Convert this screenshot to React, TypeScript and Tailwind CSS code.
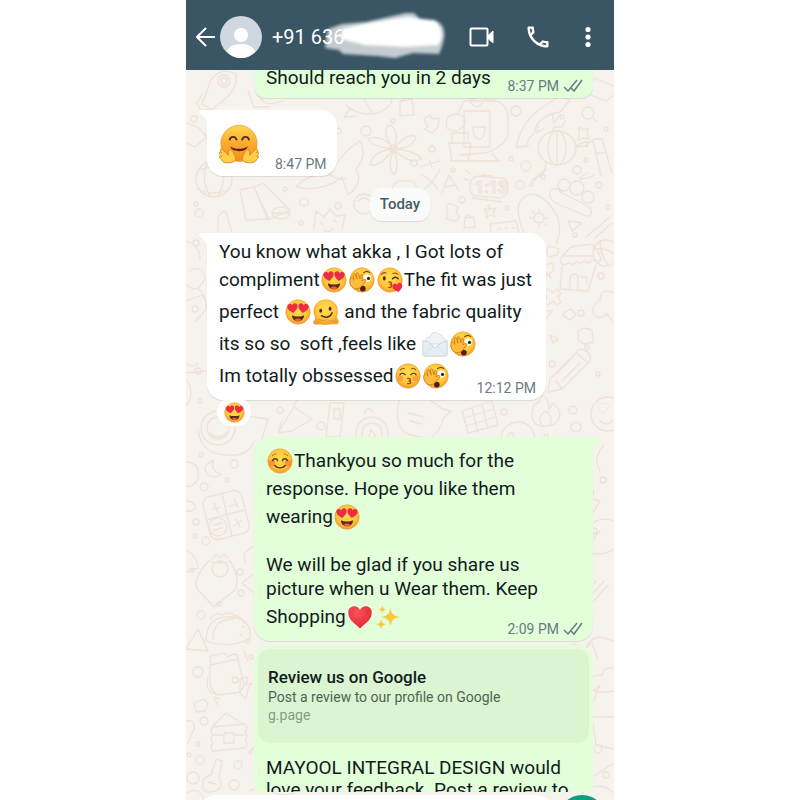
import React from "react";

type Kind = "love" | "peek" | "kiss" | "melt" | "kissclosed" | "mail" | "smile" | "hug" | "heart" | "sparkles";

const HEART = "M0 10C-4 6-11 3-11-4c0-7 9-8 11-2 2-6 11-5 11 2 0 7-7 10-11 14z";

function Face() {
  return <circle cx="32" cy="32" r="30" fill="url(#face)" stroke="#e9982a" strokeWidth="1.5" />;
}

function EmojiArt({ kind }: { kind: Kind }) {
  switch (kind) {
    case "love":
      return (
        <>
          <Face />
          <path d={HEART} transform="translate(19 23) rotate(-8) scale(1.15)" fill="#ee2b45" />
          <path d={HEART} transform="translate(45 23) rotate(8) scale(1.15)" fill="#ee2b45" />
          <path d="M17 40c8 4 22 4 30 0 0 8-6 15-15 15s-15-7-15-15z" fill="#5a2a12" />
          <path d="M24 51c4-4 12-4 16 0-4 5-12 5-16 0z" fill="#f05a4a" />
        </>
      );
    case "peek":
      return (
        <>
          <Face />
          <path d="M36 14c5-4 11-4 15 0" fill="none" stroke="#7a4512" strokeWidth="3" strokeLinecap="round" />
          <circle cx="45" cy="27" r="9" fill="#fff" />
          <circle cx="48" cy="28" r="4" fill="#3f2413" />
          <ellipse cx="34" cy="53" rx="7" ry="7" fill="#4a2410" />
          <path
            d="M3 31c3-8 7-5 9 2l-2-14c1-4 5-4 6 0l4 11-2-13c1-4 5-3 6 0l3 12 1-9c2-4 6-2 5 2l-1 12 5-3c4-2 6 2 3 5L31 47c-5 7-17 9-23 2-5-5-8-11-5-18z"
            fill="#ffbd3b"
            stroke="#c97518"
            strokeWidth="2"
            strokeLinejoin="round"
          />
        </>
      );
    case "kiss":
      return (
        <>
          <Face />
          <path d="M10 18c4-4 9-5 13-3M39 16c5-2 9-1 12 2" fill="none" stroke="#8a5217" strokeWidth="2.5" strokeLinecap="round" />
          <ellipse cx="18" cy="28" rx="3.5" ry="5" fill="#4a2a12" />
          <path d="M38 29c4-4 10-4 14 0" fill="none" stroke="#4a2a12" strokeWidth="3.5" strokeLinecap="round" />
          <path d="M29 37c9-1 9 6 2 6 8 0 8 8-2 7" fill="none" stroke="#b3341c" strokeWidth="3" strokeLinecap="round" />
          <path d={HEART} transform="translate(51 51) rotate(-12) scale(1.1)" fill="#ee2b45" />
        </>
      );
    case "melt":
      return (
        <>
          <path
            d="M32 2c18 0 29 13 28 29 0 8-3 12-1 17 2 6 5 6 3 11-2 4-8 2-13 2-8 0-12 2-19 2-8 0-11-2-17-1-6 0-12 1-12-4 0-5 5-5 5-11 0-5-4-9-4-16C2 15 14 2 32 2z"
            fill="url(#face)"
            stroke="#e9982a"
            strokeWidth="1.5"
          />
          <ellipse cx="19" cy="29" rx="3.5" ry="5" fill="#4a2a12" />
          <ellipse cx="42" cy="24" rx="3.5" ry="5" fill="#4a2a12" />
          <path d="M21 41c10 7 22 4 26-7" fill="none" stroke="#4a2a12" strokeWidth="3.5" strokeLinecap="round" />
          <path d="M12 50c8 3 16 4 22 1M40 54c5 1 9 0 12-1" fill="none" stroke="#e9982a" strokeWidth="2.5" strokeLinecap="round" />
        </>
      );
    case "kissclosed":
      return (
        <>
          <Face />
          <circle cx="13" cy="38" r="7" fill="#f58a3c" opacity=".6" />
          <circle cx="51" cy="38" r="7" fill="#f58a3c" opacity=".6" />
          <path d="M13 17c3-3 6-4 10-3M41 14c4-1 8 0 10 3" fill="none" stroke="#8a5217" strokeWidth="2.5" strokeLinecap="round" />
          <path d="M12 29c3-5 10-5 13 0M39 29c3-5 10-5 13 0" fill="none" stroke="#4a2a12" strokeWidth="3" strokeLinecap="round" />
          <path d="M31 38c9-1 9 6 2 6 8 0 8 8-2 7" fill="none" stroke="#b3341c" strokeWidth="3" strokeLinecap="round" />
        </>
      );
    case "smile":
      return (
        <>
          <Face />
          <circle cx="12" cy="37" r="8" fill="#f26d2f" opacity=".55" />
          <circle cx="52" cy="37" r="8" fill="#f26d2f" opacity=".55" />
          <path d="M13 19c3-4 6-5 10-4M41 15c4-1 7 0 10 4" fill="none" stroke="#a8681c" strokeWidth="2" strokeLinecap="round" />
          <path d="M14 31c2-6 10-6 12 0M38 31c2-6 10-6 12 0" fill="none" stroke="#5a2f12" strokeWidth="3.5" strokeLinecap="round" />
          <path d="M19 43c7 8 19 8 26 0" fill="none" stroke="#5a2f12" strokeWidth="3.5" strokeLinecap="round" />
        </>
      );
    case "hug":
      return (
        <>
          <circle cx="32" cy="31" r="29" fill="url(#hugface)" stroke="#e58f26" strokeWidth="1" />
          <path d="M17 25c2-6 9-6 11 0M37 25c2-6 9-6 11 0" fill="none" stroke="#4f2c12" strokeWidth="3" strokeLinecap="round" />
          <path d="M18 36c8 5 20 5 28 0-2 10-26 10-28 0z" fill="#54280f" />
          {["", "translate(64 0) scale(-1 1)"].map((t) => (
            <path
              key={t}
              transform={t}
              d="M17 62C9 63 5 60 4 57l-3-3c-1-3 1-3 3-2l-4-5c0-3 3-3 4-1l-2-4c0-3 3-3 5 0l8 8c0-5 0-9 3-9 4 0 4 4 7 9 4 8 0 11-8 12z"
              fill="#ffcf45"
              stroke="#d98a1c"
              strokeWidth="1.5"
              strokeLinejoin="round"
            />
          ))}
        </>
      );
    case "heart":
      return <path d="M32 60C22 49 3 41 3 21 3 3 26 0 32 15 38 0 61 3 61 21c0 20-19 28-29 39z" fill="url(#redheart)" />;
    case "sparkles":
      return (
        <g fill="#fbc740">
          <path d="M38 8c2 16 6 21 24 24-18 3-22 8-24 24-2-16-6-21-24-24 18-3 22-8 24-24z" />
          <path d="M15 36c1 9 4 12 13 14-9 2-12 5-13 13-1-8-4-11-13-13 9-2 12-5 13-14zM18 3c1 7 3 9 10 10-7 2-9 4-10 10-1-6-3-8-10-10 7-1 9-3 10-10z" />
        </g>
      );
    case "mail":
      return (
        <>
          <path d="M10 32C4 22 12 14 20 15 22 4 34 0 42 8c6-1 8 4 9 8 8 2 7 12 3 16z" fill="#eef3f7" stroke="#cdd8e0" strokeWidth="2" />
          <path d="M2 24l12 2 18 15 18-13 12-4v34q0 4-4 4H6q-4 0-4-4z" fill="#e6eef4" stroke="#c2d0da" strokeWidth="2" strokeLinejoin="round" />
          <path d="M3 60l23-22M61 60L38 38" stroke="#d3dee6" strokeWidth="2" />
        </>
      );
  }
}

const Emoji = ({ kind, className = "mx-px size-[26px]" }: { kind: Kind; className?: string }) => (
  <svg viewBox="0 0 64 64" role="img" aria-label={kind} className={`inline-block shrink-0 ${className}`}>
    <EmojiArt kind={kind} />
  </svg>
);

const CIRCLES = [
  [8, 118, 3], [152, 130, 3], [180, 130, 5], [207, 120, 2], [246, 148, 3], [228, 162, 3], [330, 110, 5], [376, 116, 2], [340, 165, 5],
  [325, 158, 2], [267, 169, 2], [334, 184, 4], [118, 201, 4], [99, 188, 2], [152, 205, 3], [115, 222, 2], [276, 199, 3], [321, 207, 2],
  [391, 169, 4], [400, 159, 2], [413, 184, 3], [13, 212, 4], [10, 203, 2], [14, 400, 2], [94, 409, 3], [135, 425, 4], [318, 411, 3],
  [387, 409, 4], [390, 426, 5], [360, 435, 2], [395, 312, 3], [415, 275, 3], [389, 234, 2], [366, 363, 3], [412, 373, 2], [48, 463, 4],
  [41, 479, 2], [18, 486, 4], [15, 454, 2], [10, 521, 3], [20, 540, 4], [9, 535, 2], [55, 592, 3], [6, 569, 2], [15, 614, 4], [33, 603, 2],
  [54, 571, 3], [62, 640, 2], [12, 671, 5], [49, 679, 3], [65, 656, 2], [18, 720, 4], [12, 743, 2], [14, 759, 4], [7, 777, 6], [52, 764, 4],
  [48, 784, 5], [3, 754, 2], [417, 479, 3], [408, 530, 3], [404, 618, 3], [412, 748, 4], [420, 774, 3], [10, 242, 3], [12, 370, 3], [9, 308, 3],
  [422, 206, 2], [401, 346, 2], [357, 176, 2], [420, 128, 2],
];

function Wallpaper() {
  return (
    <svg aria-hidden="true" viewBox="0 69 428 731" className="absolute left-0 top-0 w-full" fill="none">
      <defs>
        <radialGradient id="face" cx=".5" cy=".4" r=".6">
          <stop offset="0" stopColor="#ffdc50" />
          <stop offset=".65" stopColor="#ffc83c" />
          <stop offset="1" stopColor="#f59a2c" />
        </radialGradient>
        <linearGradient id="hugface" x1="0" y1="0" x2="0" y2="1">
          <stop offset="0" stopColor="#ffd84d" />
          <stop offset=".55" stopColor="#fda62f" />
          <stop offset="1" stopColor="#f58a25" />
        </linearGradient>
        <radialGradient id="redheart" cx=".4" cy=".3" r=".8">
          <stop offset="0" stopColor="#fb5157" />
          <stop offset="1" stopColor="#db2436" />
        </radialGradient>
      </defs>
      <g stroke="#f0e2d6" strokeWidth="1.3" strokeLinecap="round" strokeLinejoin="round">
        {CIRCLES.map(([x, y, r]) => (
          <circle key={`${x}-${y}`} cx={x} cy={y} r={r} />
        ))}
        {/* rocket, planet */}
        <path d="M16 103l9-24q10-14 25-6 2 14-10 24l-14 12zM16 93l-5 9 5 10M27 108l-9 1" />
        <circle cx="38" cy="80" r="6" />
        <circle cx="38" cy="80" r="3" />
        <path d="M0 122l12 4 9 10-12 10-9-4M62 90l6 16h16M70 90c8 16 14 14 26 10" />
        {/* globe */}
        <circle cx="28" cy="178" r="18" />
        <path d="M12 170q16-8 32 0M12 188q16 8 32 0M22 161q-8 17 2 34M34 161q8 17-2 34" />
        {/* book and burger */}
        <path d="M54 189l14-3 15 32-23 1zM68 186l9-4 27 27-22 10z" />
        <ellipse cx="95" cy="212" rx="9" ry="6" />
        <path d="M86 212h18" />
        <path d="M32 230v-13q7-14 10 1l4 14M26 236h26" />
        {/* umbrella fish */}
        <path d="M160 104q12 12 32 8 14-6 14-14M164 108l-6 8 12-1M178 98l8 14" />
        {/* whale */}
        <path d="M110 186q12-14 34-12 10-22 30-34 8 14-4 28 8 14-8 26l-6-18q-20 16-46 10zM144 174q10 6 16 4" />
        {/* star flower */}
        <path d="M208 148q-14-18-4-24 10 6 4 24 14-18 22-12-4 12-22 12 22 2 28 10-14 6-28-10 6 18 0 26-8-8 0-26-14 18-24 16 2-14 24-16-22-2-26-10 14-6 26 10z" />
        <circle cx="208" cy="148" r="4" />
        {/* cat and moon */}
        <path d="M128 228l2-18 8 6 6-8 6 7 9-1-3 14M135 222l2 2M148 219l2 2M138 229q6 4 9-2" />
        <circle cx="178" cy="203" r="10" />
        <path d="M172 200q6-6 12 0M205 190q4-12 14-10 10-2 12 8" />
        {/* gardener */}
        <path d="M262 116q-6 14 8 14 12-4 8-14-8-6-16 0zM263 142h22l-3 18h-16zM266 132h16v10h-16zM272 112l6-12h32q12 4 12 16v18q-6 14-24 18l-24 2M284 99q6 14 14 0M278 110h26v36h-26zM287 126h12q0 12-6 12t-6-12M312 160l-6-8M264 160h50" />
        <path d="M276 92q6 10 18 4l2-10M300 93q-4 8 8 6" />
        {/* shopping bag, leaf */}
        <path d="M214 100l12-2 2 16-14 1zM216 100q4-10 8-1M238 118l4 8-4 2 8 4 6-6 1-9-7 1-2-4z" />
        {/* translate and clock */}
        <path d="M234 166l20-6M244 160l2 6M254 168q-8 16-16 20M236 174q10 6 16 14M256 192l7-18 10 16M258 186l12-2" />
        <rect x="284" y="176" width="38" height="20" rx="8" transform="rotate(4 303 186)" />
        <path d="M286 197l30 4M280 170l4 3M278 178l4 1M296 174l10 1" />
        <text x="289" y="192" fontSize="16" fontWeight="700" strokeWidth="1" className="font-['Roboto',sans-serif]">1:13</text>
        {/* koi */}
        <path d="M330 146q6-28 30-42 12-8 22-14M330 146l12-1q-2-8 6-12 2-18 26-22l10-12-10-4M352 124l-1 8 7-5M366 112l2 10 6-8" />
        {/* lantern */}
        <ellipse cx="371" cy="147" rx="19" ry="17" />
        <ellipse cx="371" cy="147" rx="9" ry="17" />
        <path d="M371 130v34M366 130l2-4h8l3-6M360 161l-1 8q-8 4-12 14l-1 2h-3l4-7q8-2 13-10" />
        {/* sparkle and magnifier */}
        <path d="M393 126l4 3 5-2-1 6 2 5-6-1-5 2 1-6zM302 204l3 4 5-1-3 4 2 5-5-2-4 3 1-5-3-4 5 1z" />
        <circle cx="402" cy="112" r="6" />
        <path d="M407 117l3 3M400 93l8-16 20 8M400 92l20 8 8-6" />
        {/* bamboo */}
        <path d="M400 144l8-6h8l10 34M407 140l8 34M402 145q-10 0-14 2 6-6 14-6M402 172q-6 2-8 6 8 0 14-4M410 152h8" />
        {/* surf board */}
        <path d="M332 208q0-10 12-15 16 0 28 24 4 14-2 26M332 208q2 24 14 32" />
        <circle cx="353" cy="217" r="5" />
        <path d="M353 208v2M353 224v2M344 217h2M360 217h2M346 210l2 2M359 223l1 1" />
        {/* caterpillar */}
        <circle cx="378" cy="184" r="6" />
        <circle cx="391" cy="187" r="7" />
        <circle cx="402" cy="196" r="6" />
        <path d="M364 190q6-6 12 2l28 14q4 10-4 9l-28-12q-10-4-8-13zM382 220l14 2-10 8z" />
        <path d="M260 206l4-4 8 4-2 6 4 4-4 4-10-2 2-6zM280 217l8-1 1 10-11 1 1-10q2-6 6 0M304 223l26-3 4 16M304 223l2 14M312 228h2M319 227h2M326 227h2M400 236l24-20M408 238l18-16" />
        {/* left strip beside the long message */}
        <path d="M0 240q14 4 14 18M3 270q14-8 16 8-8 16-18 6M0 300l16-6 6 12-12 14M0 362q8 6 12 0M0 372l20-2M0 405q10-14 0-26M12 288q8 4 8 18" />
        {/* hut, pencil, cross on the right strip */}
        <path d="M374 258l11-12 20-3q8 6 10 16l-4 2q-4-4-8 1-4-4-8 1-4-4-8 1-4-4-8 0-4 0-5-6zM376 266l-2 22 28 2 8-26M384 289v-14q6-4 8 0v14M395 276h6v6M378 255h30" />
        <path d="M366 291l-4-3-4 4 3 4-3 5 4 3 5-4 4 4 4-3-3-5 3-4-4-4-5 4zM360 250l4-5 9 3-2 6-8 2zM358 264l8-2 2 7-5 4 2 4-4-3zM378 311l7-3 5 6-6 5-7-4zM352 318q6-10 14-8l-6 8-10 4M392 330l6-3 8 2 1 12-9 2-6-4zM364 334l8 4-5 4z" />
        <path d="M364 378l26-26 12 10-26 26-14 3zM390 352l4-4q12 2 10 12l-2 2M371 372l14-14M376 380l18-18M370 380l6 8" />
        <path d="M428 292q-14-6-14 8-10 4-6 14 8 6 12-2l8 10" />
        <circle cx="420" cy="252" r="13" />
        <path d="M408 248q14-2 24 8M414 240q0 14 8 24" />
        {/* beneath the long message */}
        <circle cx="32" cy="427" r="17" />
        <circle cx="32" cy="427" r="11" />
        <path d="M24 432q8 8 16 0M40 412l42 6-6 20M92 432l16-26 18 12-20 12zM92 432l4-12M108 404l6-8M144 402h14l-4 34h-14zM148 408h6v10h-6z" />
        <circle cx="186" cy="432" r="16" />
        <circle cx="186" cy="432" r="10" />
        <path d="M182 438l3-9 5 6zM178 412q4-8 10 0M213 400q-6 30 12 34l18 4q12-8 14-20l8-8-8-2-12-8M222 412l16 4M224 420l12 3" />
        <path d="M276 410l30-10 6 24-30 8zM286 407l6 24M296 404l6 24M278 417l30-9M280 425l30-9M348 404q-6 20 8 21 16 1 18-11-1-9-8-12 0 4-3 6 0-10-7-14-2 8-8 10M356 424q-6-8 4-14 8 8 4 14" />
        <circle cx="332" cy="438" r="17" />
        <circle cx="325" cy="435" r="3" />
        <circle cx="422" cy="413" r="17" />
        <path d={HEART} transform="translate(417 407) scale(.5)" />
        <path d="M414 420q6 6 12 0" />
        {/* left strip */}
        <path d="M12 430q4 24 30 24 20 2 26-14M0 461q14 0 12 16-4 10-12 8" />
        <path d="M23 462q6-4 4-1-2 9 8 12-6 6-14 0-5-7 2-11z" />
        <rect x="20" y="492" width="40" height="44" rx="8" transform="rotate(-14 40 514)" />
        <path d="M36 493l10 42M20 519l38-10M28 502l4 10M27 508l7-2M48 498l4 8M44 505l8-2M50 518l4 8M48 525l8-6" />
        <circle cx="32" cy="526" r="9" />
        <path d="M28 524l8-2M28 529l8-2M0 500q8 0 10 6-4 6-10 4M0 549q12 6 12 18l-12 4" />
        <path d="M23 560q-16 16-12 28l17 18 22-18q4-14-6-28-10 4-21 0z" />
        <circle cx="34" cy="568" r="8" />
        <path d="M26 558l4-4 4 3 4-4 4 4M66 574l-10 8 12 10M68 546q-14 4-8 16" />
        {/* taco */}
        <path d="M20 640q0-26 26-24 20 2 18 22-22 10-44 2zM27 638q0-20 20-20M24 618q6-8 12-4 6-4 12 0 8 2 10 8M56 626h2M54 634h2M0 648l12-20 10 22z" />
        {/* cooking pot, lightning, cabin */}
        <path d="M24 664l28-6 6 26q-2 8-10 8l-16 2q-8-4-8-14zM25 662q-3-10 6-8 8-4 11 2 8-6 10 0v4M22 676q-4 18 12 18M58 650l4 10M54 692l6 6 2-10 4-6-6 2 2-8-8 2zM8 702l10-4 4 5-3 7-9 1z" />
        <path d="M26 726l14-14 18 12M32 704l-4-8 6 2M27 726q-4 4 0 8-4 4 0 8-4 4 0 8l32-3q4-4 0-8 4-4 0-8 4-4 0-8zM38 732h10v10H38zM28 734h9M48 734h10M0 720q10-2 8 8l-6 14M64 754l4-8-6 6" />
        <path d="M30 758l6 2-3 16q6 10-4 14-14 4-12-8 0-6 8-8zM22 781l8 2M0 792q14-8 18 8M64 790q10-6 20 0t24 2" />
        {/* right strip */}
        <path d="M396 492l12-2-2 8 8 2-10 16 1-10-7-2zM428 520q-16-6-28 8 8 6 14 2l-16 18q14 10 30 0M394 570l-2-10 10 4 6-12M396 594l14-14M400 600l18-20M408 600l14-16M398 660q0-22 16-24l14 4M396 650l10-8 6 16" />
        <path d="M428 668q-10-4-12 6-14 0-14 10 6 10 26 6M396 700l18-16-8 20-10 4M396 706l10-2M406 716h22M406 716l4 28 18 4M400 780l28-18M396 792q16-14 32 0M380 648q8-8 16-2M414 470q-8-12 4-26" />
      </g>
    </svg>
  );
}

const Ticks = () => (
  <svg viewBox="0 0 20 14" className="h-[14px] w-5" fill="none" stroke="currentColor" strokeWidth="1.5" role="img" aria-label="Delivered">
    <path d="M1 8l4 4 9-11M8 9l3 3 8-11" />
  </svg>
);

const Time = ({ children, ticks = false }: { children: string; ticks?: boolean }) => (
  <span className="flex shrink-0 items-center gap-1 text-[14px] leading-4 text-[#6a7a83]">
    {children}
    {ticks && <Ticks />}
  </span>
);

const Line = ({ children, tall = false }: { children: React.ReactNode; tall?: boolean }) => (
  <div className={`flex items-center whitespace-pre ${tall ? "h-8" : "h-6"}`}>{children}</div>
);

const Tail = ({ mine = false }: { mine?: boolean }) => (
  <svg
    aria-hidden="true"
    viewBox="0 0 9 12"
    className={`absolute top-0 h-3 w-[9px] ${mine ? "-right-2 -scale-x-100 fill-[#e3ffda]" : "-left-2 fill-white"}`}
  >
    <path d="M2 0h7v12L0 2Q0 0 2 0z" />
  </svg>
);

const iconButton = "flex h-8 shrink-0 items-center justify-center";

export default function App() {
  return (
    <div className="h-screen overflow-hidden bg-white font-['Roboto','Liberation_Sans',sans-serif] text-[#101b20]">
      <main className="mx-auto flex h-full w-full max-w-[428px] flex-col">
        <header className="flex h-[70px] shrink-0 items-center bg-[#3a5564] pb-px pl-[10px] pr-3 pt-1 text-white">
          <button type="button" aria-label="Back" className={`${iconButton} w-5`}>
            <svg viewBox="0 0 20 20" className="size-5" fill="none" stroke="currentColor" strokeWidth="2">
              <path d="M19 10H2M10 1l-9 9 9 9" />
            </svg>
          </button>
          <svg viewBox="0 0 42 42" role="img" aria-label="Contact" className="ml-1 size-[42px] shrink-0">
            <circle cx="21" cy="21" r="21" fill="#cfd8e1" />
            <circle cx="21" cy="19" r="7" fill="#fff" />
            <path d="M7 36q2-8 14-8t14 8q-6 6-14 6T7 36z" fill="#fff" />
          </svg>
          <h1 className="relative ml-[10px] flex-1 whitespace-nowrap text-[20px] leading-6">
            +91 636
            <svg viewBox="0 0 130 52" aria-hidden="true" className="absolute -top-4 left-12 h-[52px] w-[130px]">
              <defs>
                <filter id="soft">
                  <feGaussianBlur stdDeviation="1.5" />
                </filter>
              </defs>
              <g filter="url(#soft)" fill="#fff">
                <path d="M8 20l14-5 24-2 40-9 8 0 6 6 14 1q12 4 10 18-2 10-5 16l-26-1-18 5-18-2-34-2-4-4-14-2z" opacity=".7" />
                <path d="M22 20l26-6 40-6 28 4q10 14 2 24l-33 2-40-2-24-6z" />
              </g>
            </svg>
          </h1>
          <button type="button" aria-label="Video call" className={`${iconButton} w-7`}>
            <svg viewBox="0 0 26 20" className="h-5 w-[26px]" fill="none" stroke="currentColor" strokeWidth="2">
              <rect x="1.5" y="1.5" width="17" height="17" rx="1" />
              <path d="M19.5 8l4.500-4v12l-4.500-4z" fill="currentColor" strokeWidth="1" />
            </svg>
          </button>
          <button type="button" aria-label="Call" className={`${iconButton} ml-7 w-7`}>
            <svg viewBox="0 0 24 24" className="size-7" fill="currentColor">
              <path d="M6.540 5c.06.89.21 1.760.45 2.590l-1.200 1.200c-.41-1.200-.67-2.470-.76-3.790h1.510m9.860 12.020c.85.24 1.720.39 2.600.45v1.490c-1.320-.09-2.590-.35-3.800-.75l1.200-1.190M7.500 3H4c-.55 0-1 .45-1 1 0 9.390 7.610 17 17 17 .55 0 1-.45 1-1v-3.490c0-.55-.45-1-1-1-1.240 0-2.450-.2-3.570-.57-.1-.04-.21-.05-.31-.05-.26 0-.51.1-.71.29l-2.200 2.200c-2.830-1.450-5.150-3.760-6.590-6.590l2.200-2.200c.28-.28.36-.67.25-1.020C8.700 6.450 8.500 5.250 8.500 4c0-.55-.45-1-1-1z" />
            </svg>
          </button>
          <button type="button" aria-label="More options" className={`${iconButton} ml-[22px] w-7`}>
            <svg viewBox="0 0 6 22" className="h-[22px] w-[6px]" fill="currentColor">
              <circle cx="3" cy="3.500" r="2.600" />
              <circle cx="3" cy="11" r="2.600" />
              <circle cx="3" cy="18.500" r="2.600" />
            </svg>
          </button>
        </header>

        <div className="relative flex min-h-0 flex-1 flex-col overflow-hidden bg-[#f6f2ed]">
          <Wallpaper />
          <section aria-label="Messages" className="relative flex min-h-0 flex-1 flex-col overflow-hidden px-[21px] text-[19px]">
            <article className="ml-[47px] flex shrink-0 items-end justify-between rounded-b-xl bg-[#e3ffda] pb-1 pl-3 pr-[10px] shadow-[0_1px_1px_#0000001a]">
              <p className="pb-2 leading-4">Should reach you in 2 days</p>
              <Time ticks>8:37 PM</Time>
            </article>

            <article className="relative mt-3 flex shrink-0 items-end gap-4 self-start rounded-2xl rounded-tl-none bg-white pb-1 pl-3 pr-[10px] pt-[14px] shadow-[0_1px_1px_#0000001a]">
              <Tail />
              <Emoji kind="hug" className="mb-2 size-10" />
              <Time>8:47 PM</Time>
            </article>

            <div className="mt-3 shrink-0 self-center rounded-xl bg-[#f9fafa] px-[10px] py-[6px] text-[15px] font-medium leading-[21px] text-[#4a5a64] shadow-[0_1px_1px_#0000001a]">
              Today
            </div>

            <article className="relative mr-[47px] mt-3 shrink-0 rounded-2xl rounded-tl-none bg-white pb-2 pl-3 pr-[10px] pt-[7px] shadow-[0_1px_1px_#0000001a]">
              <Tail />
              <Line>You know what akka , I Got lots of</Line>
              <Line tall>compliment<Emoji kind="love" /><Emoji kind="peek" /><Emoji kind="kiss" />The fit was just</Line>
              <Line tall>perfect <Emoji kind="love" /><Emoji kind="melt" /> and the fabric quality</Line>
              <Line tall>its so so  soft ,feels like <Emoji kind="mail" /><Emoji kind="peek" /></Line>
              <div className="-mb-1 flex items-end justify-between">
                <div className="pb-1">
                  <Line tall>Im totally obssessed<Emoji kind="kissclosed" /><Emoji kind="peek" /></Line>
                </div>
                <Time>12:12 PM</Time>
              </div>
            </article>
            <button
              type="button"
              aria-label="Reaction"
              className="relative -mt-[2px] ml-[10px] flex h-7 w-[34px] shrink-0 items-center justify-center rounded-full bg-white"
            >
              <Emoji kind="love" className="size-[21px]" />
            </button>

            <article className="relative ml-[47px] mt-[11px] shrink-0 rounded-2xl rounded-tr-none bg-[#e3ffda] pb-2 pl-3 pr-[10px] pt-2 shadow-[0_1px_1px_#0000001a]">
              <Tail mine />
              <Line tall><Emoji kind="smile" />Thankyou so much for the</Line>
              <Line>response. Hope you like them</Line>
              <Line tall>wearing<Emoji kind="love" /></Line>
              <div className="h-5" />
              <Line>We will be glad if you share us</Line>
              <Line>picture when u Wear them. Keep</Line>
              <div className="-mb-1 flex items-end justify-between">
                <div className="pb-1">
                  <Line tall>Shopping<Emoji kind="heart" />{"  "}<Emoji kind="sparkles" /></Line>
                </div>
                <Time ticks>2:09 PM</Time>
              </div>
            </article>

            <article className="ml-[47px] mt-1 shrink-0 rounded-t-2xl bg-[#e3ffda] px-1 pt-1">
              <a href="#review" className="block rounded-xl bg-[#dbf5d2] px-[10px] pb-5 pt-[18px]">
                <strong className="block text-[17px] font-medium leading-5">Review us on Google</strong>
                <span className="block text-[14px] leading-5 text-[#4f6353]">Post a review to our profile on Google</span>
                <span className="block text-[14px] leading-4 text-[#869a86]">g.page</span>
              </a>
              <p className="whitespace-pre-line pl-2 pt-[14px] leading-[22px]">
                {"MAYOOL INTEGRAL DESIGN would\nlove your feedback. Post a review to"}
              </p>
            </article>
          </section>
          <footer className="relative flex h-2 shrink-0 items-start justify-between overflow-hidden px-2 pt-[3px]">
            <div className="h-12 flex-1 rounded-t-3xl bg-white" />
            <button type="button" aria-label="Voice message" className="size-12 shrink-0 rounded-full bg-[#0a9f7c]" />
          </footer>
        </div>
      </main>
    </div>
  );
}
